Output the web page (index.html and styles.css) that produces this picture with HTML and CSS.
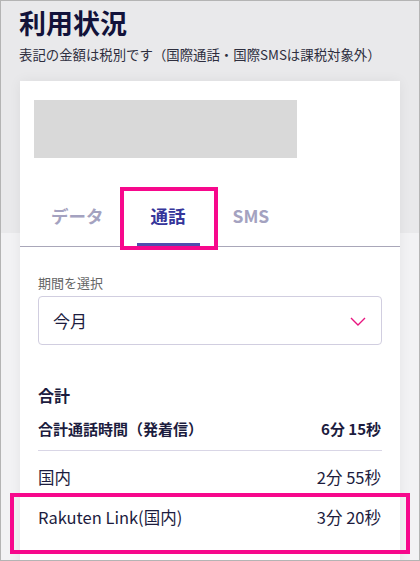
FILE: index.html
```html
<!DOCTYPE html>
<html lang="ja">
<head>
<meta charset="utf-8">
<title>利用状況</title>
<link rel="stylesheet" href="styles.css">
</head>
<body>
<div class="page">
  <header class="head">
    <h1 class="title">利用状況</h1>
    <p class="note">表記の金額は税別です（国際通話・国際SMSは課税対象外）</p>
  </header>
  <section class="card">
    <div class="placeholder"></div>
    <nav class="tabs">
      <span class="tab">データ</span>
      <span class="tab active">通話</span>
      <span class="tab">SMS</span>
    </nav>
    <div class="body">
      <div class="label">期間を選択</div>
      <div class="select">
        <span>今月</span>
        <svg class="chev" width="16" height="9" viewBox="0 0 16 9"><path d="M1 1 L8 8 L15 1" fill="none" stroke="#e8157f" stroke-width="1.4"/></svg>
      </div>
      <h2 class="sum">合計</h2>
      <div class="row total"><span>合計通話時間（発着信）</span><span>6分 15秒</span></div>
      <div class="row first"><span>国内</span><span>2分 55秒</span></div>
      <div class="row"><span>Rakuten Link(国内)</span><span>3分 20秒</span></div>
    </div>
  </section>
  <div class="mark mark-tab"></div>
  <div class="mark mark-row"></div>
</div>
</body>
</html>
```

FILE: styles.css
```css
* { box-sizing: border-box; }
html, body { margin: 0; padding: 0; }
body {
  font-family: "Noto Sans CJK JP", "Noto Sans", sans-serif;
  color: #1c1c3e;
}
.page {
  position: relative;
  width: 420px;
  height: 561px;
  overflow: hidden;
  border: 1px solid #b4b4b4;
  background: linear-gradient(#e9e9eb 0, #e9e9eb 232px, #f2f2f4 232px);
}
.head { padding: 4px 18px 0; }
.title {
  margin: 0;
  font-size: 27px;
  line-height: 36px;
  font-weight: 700;
  color: #12123a;
}
.note {
  margin: 3px 0 0;
  font-size: 13.4px;
  line-height: 20px;
  color: #2e2e3e;
}
.card {
  margin: 17px 19px 0;
  background: #fff;
  height: 500px;
  box-shadow: 0 0 12px rgba(0, 0, 0, 0.06);
  padding-top: 19px;
}
.placeholder {
  margin-left: 14px;
  width: 263px;
  height: 58px;
  background: #d9d9d9;
}
.tabs {
  display: flex;
  gap: 19px;
  margin-top: 30px;
  padding-left: 17px;
  border-bottom: 1px solid #a9a7b9;
}
.tab {
  padding: 16px 14px 15px;
  font-size: 17.5px;
  line-height: 24px;
  font-weight: 700;
  color: #a4a2c0;
  border-bottom: 3px solid transparent;
}
.tab.active {
  color: #35359a;
  border-bottom-color: #4f4fae;
}
.body { padding: 0 18px; }
.label {
  margin-top: 27px;
  font-size: 13px;
  line-height: 18px;
  color: #666;
}
.select {
  margin-top: 4px;
  height: 49px;
  border: 1px solid #d1cee0;
  border-radius: 4px;
  display: flex;
  align-items: center;
  justify-content: space-between;
  padding: 0 15px 0 14px;
  font-size: 17px;
  color: #1c1c3e;
}
.chev { margin-top: 1px; }
.sum {
  margin: 38px 0 0;
  font-size: 16px;
  line-height: 24px;
  font-weight: 700;
}
.row {
  display: flex;
  justify-content: space-between;
  font-size: 16.5px;
  line-height: 24px;
  padding: 8px 1px 8px 0;
}
.row.total {
  margin-top: 8px;
  padding: 3px 1px 10px 0;
  font-size: 15px;
  line-height: 22px;
  font-weight: 700;
  border-bottom: 1px solid #d9d6e6;
}
.row.first { margin-top: 6px; }
.mark {
  position: absolute;
  border: 4px solid #f7088c;
}
.mark-tab { left: 119px; top: 186px; width: 98px; height: 63px; }
.mark-row { left: 9px; top: 492px; width: 400px; height: 61px; }
```
